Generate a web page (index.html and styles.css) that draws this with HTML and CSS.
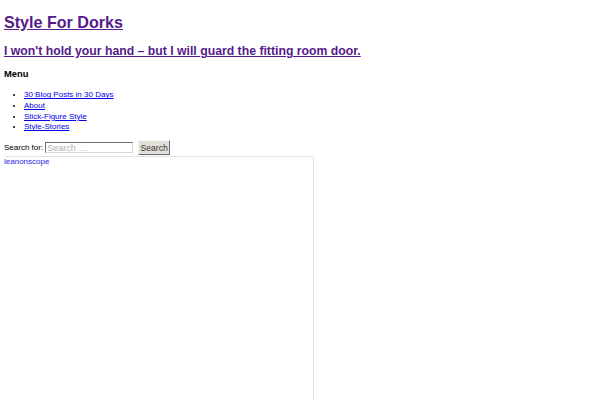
FILE: index.html
```html
<!DOCTYPE html>
<html lang="en">
<head>
<meta charset="utf-8">
<title>Style For Dorks</title>
<link rel="stylesheet" href="styles.css">
</head>
<body>
<header class="site-header">
  <h1 class="site-title"><a href="#">Style For Dorks</a></h1>
  <h2 class="site-desc"><a href="#">I won't hold your hand – but I will guard the fitting room door.</a></h2>
</header>
<nav class="menu">
  <h3 class="menu-title">Menu</h3>
  <ul class="menu-list">
    <li><a href="#">30 Blog Posts in 30 Days</a></li>
    <li><a href="#">About</a></li>
    <li><a href="#">Stick-Figure Style</a></li>
    <li><a href="#">Style-Stories</a></li>
  </ul>
</nav>
<form class="search">
  <label class="search-label" for="s">Search for:</label>
  <input class="search-input" id="s" type="text" placeholder="Search …">
  <button class="search-btn" type="button">Search</button>
</form>
<div class="embed">
  <a class="embed-link" href="#">leanonscope</a>
</div>
</body>
</html>
```

FILE: styles.css
```css
html, body {
  background: #fff;
}
body {
  margin: 4px;
  font-family: "Liberation Sans", Arial, sans-serif;
  font-size: 8px;
  color: #000;
}
a {
  color: #0000ee;
}
.site-title {
  font-size: 16.1px;
  margin: 8.7px 0 14.1px;
  line-height: 18.4px;
}
.site-title a,
.site-desc a {
  color: #551a8b;
}
.site-desc {
  font-size: 12.25px;
  margin: 0 0 9.7px;
  line-height: 13.8px;
}
.menu-title {
  font-size: 9.36px;
  line-height: 10.75px;
  margin: 0 0 10.75px;
}
.menu-list {
  margin: 0 0 6.5px;
  padding-left: 20px;
}
.menu-list li {
  line-height: 10.7px;
}
.search {
  display: flex;
  align-items: center;
  height: 16.2px;
  margin: 0;
}
.search-label {
  font-size: 8px;
  margin-right: 2px;
}
.search-input {
  box-sizing: border-box;
  width: 88px;
  height: 10.6px;
  margin: 0 5px 0 0;
  padding: 0 1px;
  font-family: "Liberation Sans", Arial, sans-serif;
  font-size: 9px;
  border: 1px solid;
  border-color: #6e6e6e #d8d8d8 #d8d8d8 #6e6e6e;
  background: #fff;
  outline: none;
}
.search-input::placeholder {
  color: #b0b0b0;
}
.search-btn {
  box-sizing: border-box;
  width: 32px;
  height: 14.7px;
  margin: 0;
  padding: 0;
  font-family: "Liberation Sans", Arial, sans-serif;
  font-size: 8.6px;
  color: #333;
  background: #e3e0da;
  border: 1px solid;
  border-color: #f4f4f4 #6a6a6a #6a6a6a #f4f4f4;
}
.embed {
  box-sizing: border-box;
  width: 311px;
  height: 300px;
  margin-left: -1px;
  border: 1px solid #e3e3e3;
}
.embed-link {
  display: block;
  font-size: 8px;
  line-height: 9.2px;
  color: #2424e0;
  text-decoration: none;
}
```
